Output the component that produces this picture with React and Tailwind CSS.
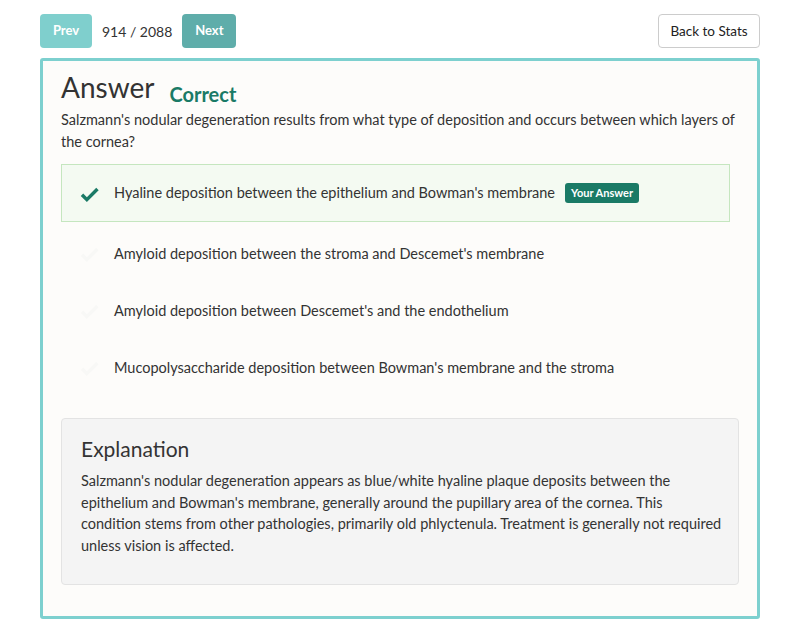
import React from "react";

const options = [
    "Amyloid deposition between the stroma and Descemet's membrane",
    "Amyloid deposition between Descemet's and the endothelium",
    "Mucopolysaccharide deposition between Bowman's membrane and the stroma",
];

const Check = ({ className }) => (
    <svg viewBox="0 0 24 24" className={className} fill="currentColor">
        <path d="M9 16.2 4.8 12l-2.8 2.8L9 21.8 22.5 8.3l-2.8-2.8z" />
    </svg>
);

const App = () => {
    return (
        <div
            className="min-h-[643px] bg-white px-10 pt-[14px] text-[#333]"
            style={{ fontFamily: "Lato, 'Open Sans', sans-serif" }}
        >
            {/* Top bar */}
            <div className="flex items-center justify-between">
                <div className="flex items-center">
                    <button className="h-[34px] w-[52px] rounded bg-[#7fcfcd] text-[13px] font-bold text-white">
                        Prev
                    </button>
                    <span className="mx-[10px] text-[14px]">914 / 2088</span>
                    <button className="h-[34px] w-[54px] rounded bg-[#5fadaa] text-[13px] font-bold text-white">
                        Next
                    </button>
                </div>
                <button className="h-[34px] w-[102px] rounded border border-[#ccc] bg-white text-[13.5px] text-[#222]">
                    Back to Stats
                </button>
            </div>

            {/* Card */}
            <div className="mt-[10px] h-[561px] rounded-[3px] border-[3px] border-[#7dd0cf] bg-[#fdfcfa] px-[18px] pt-[6px]">
                <div className="flex items-end">
                    <h1 className="text-[28px] leading-[40px]">Answer</h1>
                    <span className="mb-[-2px] ml-[15px] text-[20px] font-bold leading-[30px] text-[#1a7a66]">
                        Correct
                    </span>
                </div>
                <p className="mt-[2px] text-[14.5px] leading-[22px]">
                    Salzmann's nodular degeneration results from what type of deposition and occurs between which
                    layers of the cornea?
                </p>

                {/* Options */}
                <div className="mr-[9px] mt-[11px]">
                    <div className="flex h-[58px] items-center border border-[#c5e6bf] bg-[#f4faf2] pl-[17px]">
                        <Check className="h-[21px] w-[21px] text-[#1a7a66]" />
                        <span className="ml-[14px] text-[14.5px]">
                            Hyaline deposition between the epithelium and Bowman's membrane
                        </span>
                        <span className="ml-[10px] rounded-[3px] bg-[#1a7a66] px-[6px] py-[2px] text-[11px] font-bold text-white">
                            Your Answer
                        </span>
                    </div>
                    <div className="mt-[3px]">
                        {options.map((o) => (
                            <div key={o} className="flex h-[57px] items-center pl-[18px]">
                                <Check className="h-[21px] w-[21px] text-[#f8f8f6]" />
                                <span className="ml-[14px] text-[14.5px]">{o}</span>
                            </div>
                        ))}
                    </div>
                </div>

                {/* Explanation */}
                <div className="mt-[22px] h-[167px] rounded border border-[#e3e3e3] bg-[#f4f4f4] pl-[19px] pr-[12px] pt-[15px]">
                    <h2 className="text-[21px] leading-[30px]">Explanation</h2>
                    <p className="mt-[6px] text-[14.5px] leading-[21.5px]">
                        Salzmann's nodular degeneration appears as blue/white hyaline plaque deposits between the
                        epithelium and Bowman's membrane, generally around the pupillary area of the cornea. This
                        condition stems from other pathologies, primarily old phlyctenula. Treatment is generally
                        not required unless vision is affected.
                    </p>
                </div>
            </div>
        </div>
    );
};

export default App;
